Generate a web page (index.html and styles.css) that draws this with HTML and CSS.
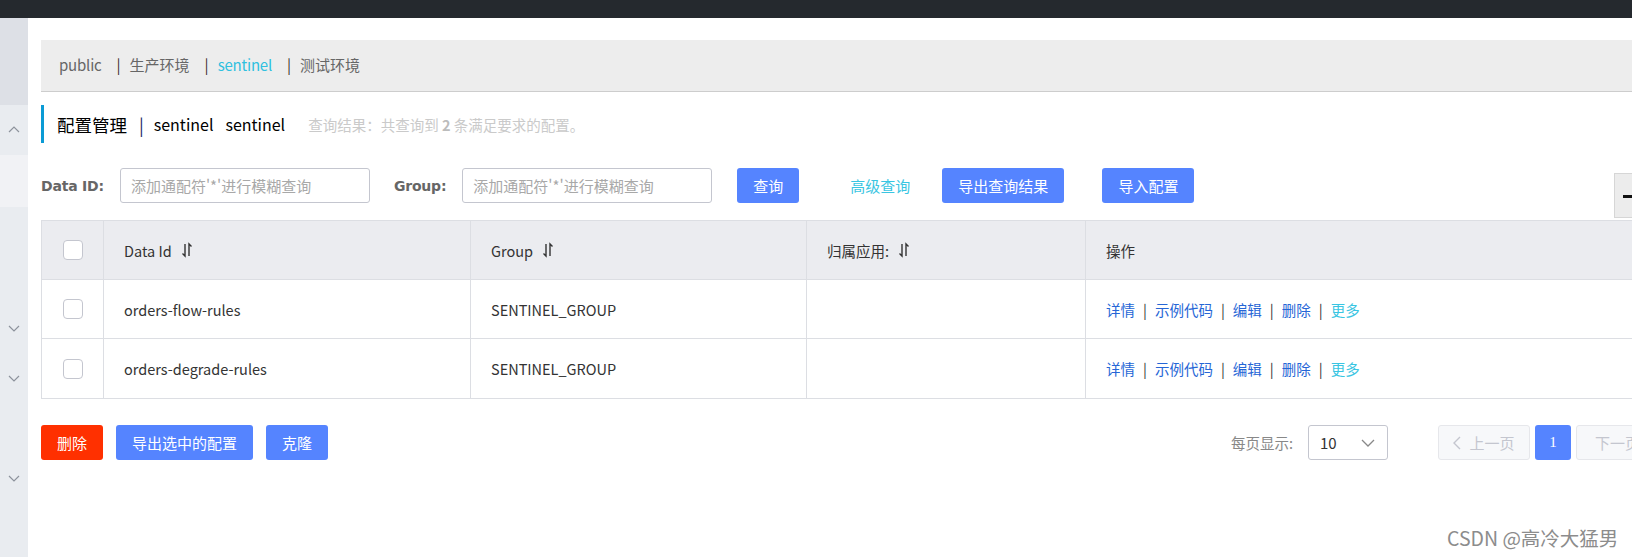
FILE: index.html
```html
<!DOCTYPE html>
<html lang="zh-CN">
<head>
<meta charset="utf-8">
<title>配置管理</title>
<link rel="stylesheet" href="styles.css">
</head>
<body>
<div class="topbar"></div>
<div class="layout">
  <aside class="sidebar">
    <div class="sb-head"></div>
    <div class="sb-item sb-up">
      <svg width="12" height="7" viewBox="0 0 12 7"><polyline points="1,6 6,1 11,6" fill="none" stroke="#8d939c" stroke-width="1.2"/></svg>
    </div>
    <div class="sb-item sb-active"></div>
    <div class="sb-rest">
      <div class="sb-chev c1"><svg width="12" height="7" viewBox="0 0 12 7"><polyline points="1,1 6,6 11,1" fill="none" stroke="#8d939c" stroke-width="1.2"/></svg></div>
      <div class="sb-chev c2"><svg width="12" height="7" viewBox="0 0 12 7"><polyline points="1,1 6,6 11,1" fill="none" stroke="#8d939c" stroke-width="1.2"/></svg></div>
      <div class="sb-chev c3"><svg width="12" height="7" viewBox="0 0 12 7"><polyline points="1,1 6,6 11,1" fill="none" stroke="#8d939c" stroke-width="1.2"/></svg></div>
    </div>
  </aside>
  <main class="main">
    <div class="content">
      <nav class="tabs">
        <span class="tab">public</span>
        <span class="sep">|</span><span class="tab">生产环境</span>
        <span class="sep">|</span><span class="tab active">sentinel</span>
        <span class="sep">|</span><span class="tab">测试环境</span>
      </nav>

      <div class="title">
        <span class="title-main">配置管理</span>
        <span class="title-sep">|</span>
        <span class="title-ns">sentinel</span>
        <span class="title-ns">sentinel</span>
        <span class="title-hint">查询结果：共查询到 <b>2</b> 条满足要求的配置。</span>
      </div>

      <div class="search">
        <label class="lbl">Data ID:</label>
        <input class="inp" type="text" placeholder="添加通配符'*'进行模糊查询">
        <label class="lbl lbl-group">Group:</label>
        <input class="inp" type="text" placeholder="添加通配符'*'进行模糊查询">
        <button class="btn btn-query">查询</button>
        <a class="adv">高级查询</a>
        <button class="btn btn-export">导出查询结果</button>
        <button class="btn">导入配置</button>
      </div>

      <div class="table">
        <div class="tr thead">
          <div class="td td-check"><span class="cb"></span></div>
          <div class="td">Data Id <svg class="sort" width="12" height="16" viewBox="0 0 12 16"><path d="M4 2V14L1.5 11.5M8 14V2L10.5 4.5" fill="none" stroke="#333" stroke-width="1.4"/></svg></div>
          <div class="td">Group <svg class="sort" width="12" height="16" viewBox="0 0 12 16"><path d="M4 2V14L1.5 11.5M8 14V2L10.5 4.5" fill="none" stroke="#333" stroke-width="1.4"/></svg></div>
          <div class="td">归属应用: <svg class="sort" width="12" height="16" viewBox="0 0 12 16"><path d="M4 2V14L1.5 11.5M8 14V2L10.5 4.5" fill="none" stroke="#333" stroke-width="1.4"/></svg></div>
          <div class="td td-last">操作</div>
        </div>
        <div class="tr">
          <div class="td td-check"><span class="cb"></span></div>
          <div class="td">orders-flow-rules</div>
          <div class="td">SENTINEL_GROUP</div>
          <div class="td"></div>
          <div class="td td-last ops"><a>详情</a><i>|</i><a>示例代码</a><i>|</i><a>编辑</a><i>|</i><a>删除</a><i>|</i><a class="more">更多</a></div>
        </div>
        <div class="tr last">
          <div class="td td-check"><span class="cb"></span></div>
          <div class="td">orders-degrade-rules</div>
          <div class="td">SENTINEL_GROUP</div>
          <div class="td"></div>
          <div class="td td-last ops"><a>详情</a><i>|</i><a>示例代码</a><i>|</i><a>编辑</a><i>|</i><a>删除</a><i>|</i><a class="more">更多</a></div>
        </div>
      </div>

      <div class="footer">
        <button class="btn btn-danger">删除</button>
        <button class="btn">导出选中的配置</button>
        <button class="btn">克隆</button>
        <div class="pager">
          <span class="per">每页显示:</span>
          <div class="select"><span>10</span><svg width="14" height="8" viewBox="0 0 14 8"><polyline points="1,1 7,7 13,1" fill="none" stroke="#888" stroke-width="1.3"/></svg></div>
          <button class="pbtn prev"><svg width="8" height="14" viewBox="0 0 8 14"><polyline points="7,1 1,7 7,13" fill="none" stroke="#c4c6cf" stroke-width="1.4"/></svg>上一页</button>
          <button class="pbtn cur">1</button>
          <button class="pbtn next">下一页</button>
        </div>
      </div>
    </div>
  </main>
</div>
<div class="float-box"><span class="dash"></span></div>
<div class="watermark">CSDN @高冷大猛男</div>
</body>
</html>
```

FILE: styles.css
```css
* { box-sizing: border-box; }
html, body {
  margin: 0;
  padding: 0;
  width: 1632px;
  height: 557px;
  overflow: hidden;
  background: #fff;
  font-family: "Noto Sans CJK SC", "Open Sans", sans-serif;
  font-size: 15px;
  color: #333;
}
.topbar { height: 18px; background: #25292e; }
.layout { display: flex; height: 539px; }

.sidebar { width: 28px; flex: none; display: flex; flex-direction: column; background: #e9ecf0; }
.sb-head { height: 87px; background: #dde0e6; }
.sb-item { height: 50px; display: flex; align-items: center; justify-content: center; }
.sb-up { padding-bottom: 2px; }
.sb-active { background: #f1f2f5; height: 52px; }
.sb-rest { flex: 1; display: flex; flex-direction: column; align-items: center; }
.sb-chev { display: flex; }
.c1 { margin-top: 118px; }
.c2 { margin-top: 43px; }
.c3 { margin-top: 93px; }

.main { flex: 1; padding-left: 13px; overflow: hidden; }
.content { width: 1627px; }

.tabs {
  margin-top: 22px;
  height: 52px;
  background: #ededed;
  border-bottom: 1px solid #cdcdcd;
  display: flex;
  align-items: center;
  padding-left: 18px;
  padding-bottom: 2px;
  color: #666;
  font-size: 15px;
}
.tab { margin-right: 15px; }
.tab:first-child { letter-spacing: -0.2px; }
.sep { color: #3a3030; margin-right: 9px; }
.tab.active { color: #2fc0df; letter-spacing: -0.2px; }

.title {
  margin-top: 13px;
  height: 38px;
  border-left: 3px solid #0b9bd5;
  padding-left: 13px;
  display: flex;
  align-items: center;
  color: #000;
  font-size: 17.5px;
}
.title-sep { margin: 0 10px 0 12px; color: #1b2766; }
.title-ns { margin-right: 12px; font-size: 16px; }
.title-hint { margin-left: 11px; font-size: 14.5px; color: #cacaca; }
.title-hint b { font-weight: 700; color: #bcbcbc; }

.search { margin-top: 25px; height: 35px; display: flex; align-items: center; }
.lbl {
  font-family: "DejaVu Sans", sans-serif;
  font-weight: 700;
  font-size: 14px;
  color: #666;
  margin-right: 16px;
  letter-spacing: -0.2px;
}
.lbl-group { margin-left: 24px; }
.inp {
  width: 250px;
  height: 35px;
  border: 1px solid #c4c6cf;
  border-radius: 3px;
  padding: 0 10px;
  font-family: inherit;
  font-size: 15px;
  color: #333;
  outline: none;
}
.inp::placeholder { color: #a8a8a8; }
.btn {
  height: 35px;
  padding: 0 16px;
  border: none;
  border-radius: 3px;
  background: #5584ff;
  color: #fff;
  font-family: inherit;
  font-size: 15px;
  cursor: pointer;
  margin-right: 13px;
}
.btn-query { margin-left: 25px; margin-right: 0; }
.adv { color: #39c5e2; margin-left: 51px; margin-right: 32px; }
.btn-export { margin-right: 38px; }
.btn-danger { background: #ff3000; }

.table {
  margin-top: 17px;
  border: 1px solid #dcdee3;
  border-bottom: none;
}
.tr {
  display: grid;
  grid-template-columns: 62px 367px 336px 279px 1fr;
  height: 59px;
  border-bottom: 1px solid #dcdee3;
}
.tr.last { height: 60px; }
.thead { height: 59px; background: #ebecf0; }
.td {
  border-right: 1px solid #dcdee3;
  display: flex;
  align-items: center;
  padding-left: 20px;
  font-size: 14.5px;
  color: #333;
}
.td-last { border-right: none; }
.td-check { justify-content: center; padding-left: 0; }
.cb {
  width: 20px;
  height: 20px;
  border: 1px solid #c4c6cf;
  border-radius: 4px;
  background: #fff;
}
.sort { margin-left: 9px; }
.ops a { color: #2666d6; }
.ops i { font-style: normal; color: #333; margin: 0 8px; }
.ops a.more { color: #39c5e2; }

.footer { margin-top: 26px; height: 35px; display: flex; align-items: center; }
.pager { margin-left: auto; display: flex; align-items: center; }
.per { color: #888; font-size: 14.5px; margin-right: 15px; }
.select {
  width: 80px;
  height: 35px;
  border: 1px solid #c4c6cf;
  border-radius: 3px;
  display: flex;
  align-items: center;
  justify-content: space-between;
  padding: 0 12px 0 11px;
  color: #333;
  font-size: 15px;
  margin-right: 50px;
}
.pbtn {
  height: 35px;
  border-radius: 3px;
  font-family: inherit;
  font-size: 15px;
  display: flex;
  align-items: center;
  justify-content: center;
}
.prev, .next {
  width: 92px;
  background: #f7f8fa;
  border: 1px solid #e6e7eb;
  color: #c4c6cf;
}
.next { justify-content: flex-start; padding-left: 18px; }
.prev svg { margin-right: 8px; }
.cur {
  width: 36px;
  margin: 0 5px;
  background: #5584ff;
  border: none;
  color: #fff;
  font-family: "Liberation Serif", serif;
}

.float-box {
  position: absolute;
  left: 1614px;
  top: 173px;
  width: 30px;
  height: 45px;
  background: #ececec;
  border: 1px solid #d6d6d6;
}
.dash {
  position: absolute;
  left: 8px;
  top: 21px;
  width: 14px;
  height: 3px;
  background: #111;
}
.watermark {
  position: absolute;
  left: 1447px;
  top: 523px;
  font-size: 19.5px;
  color: #8c8c8c;
  text-shadow: 0 0 1px #fff;
  white-space: nowrap;
}
```
